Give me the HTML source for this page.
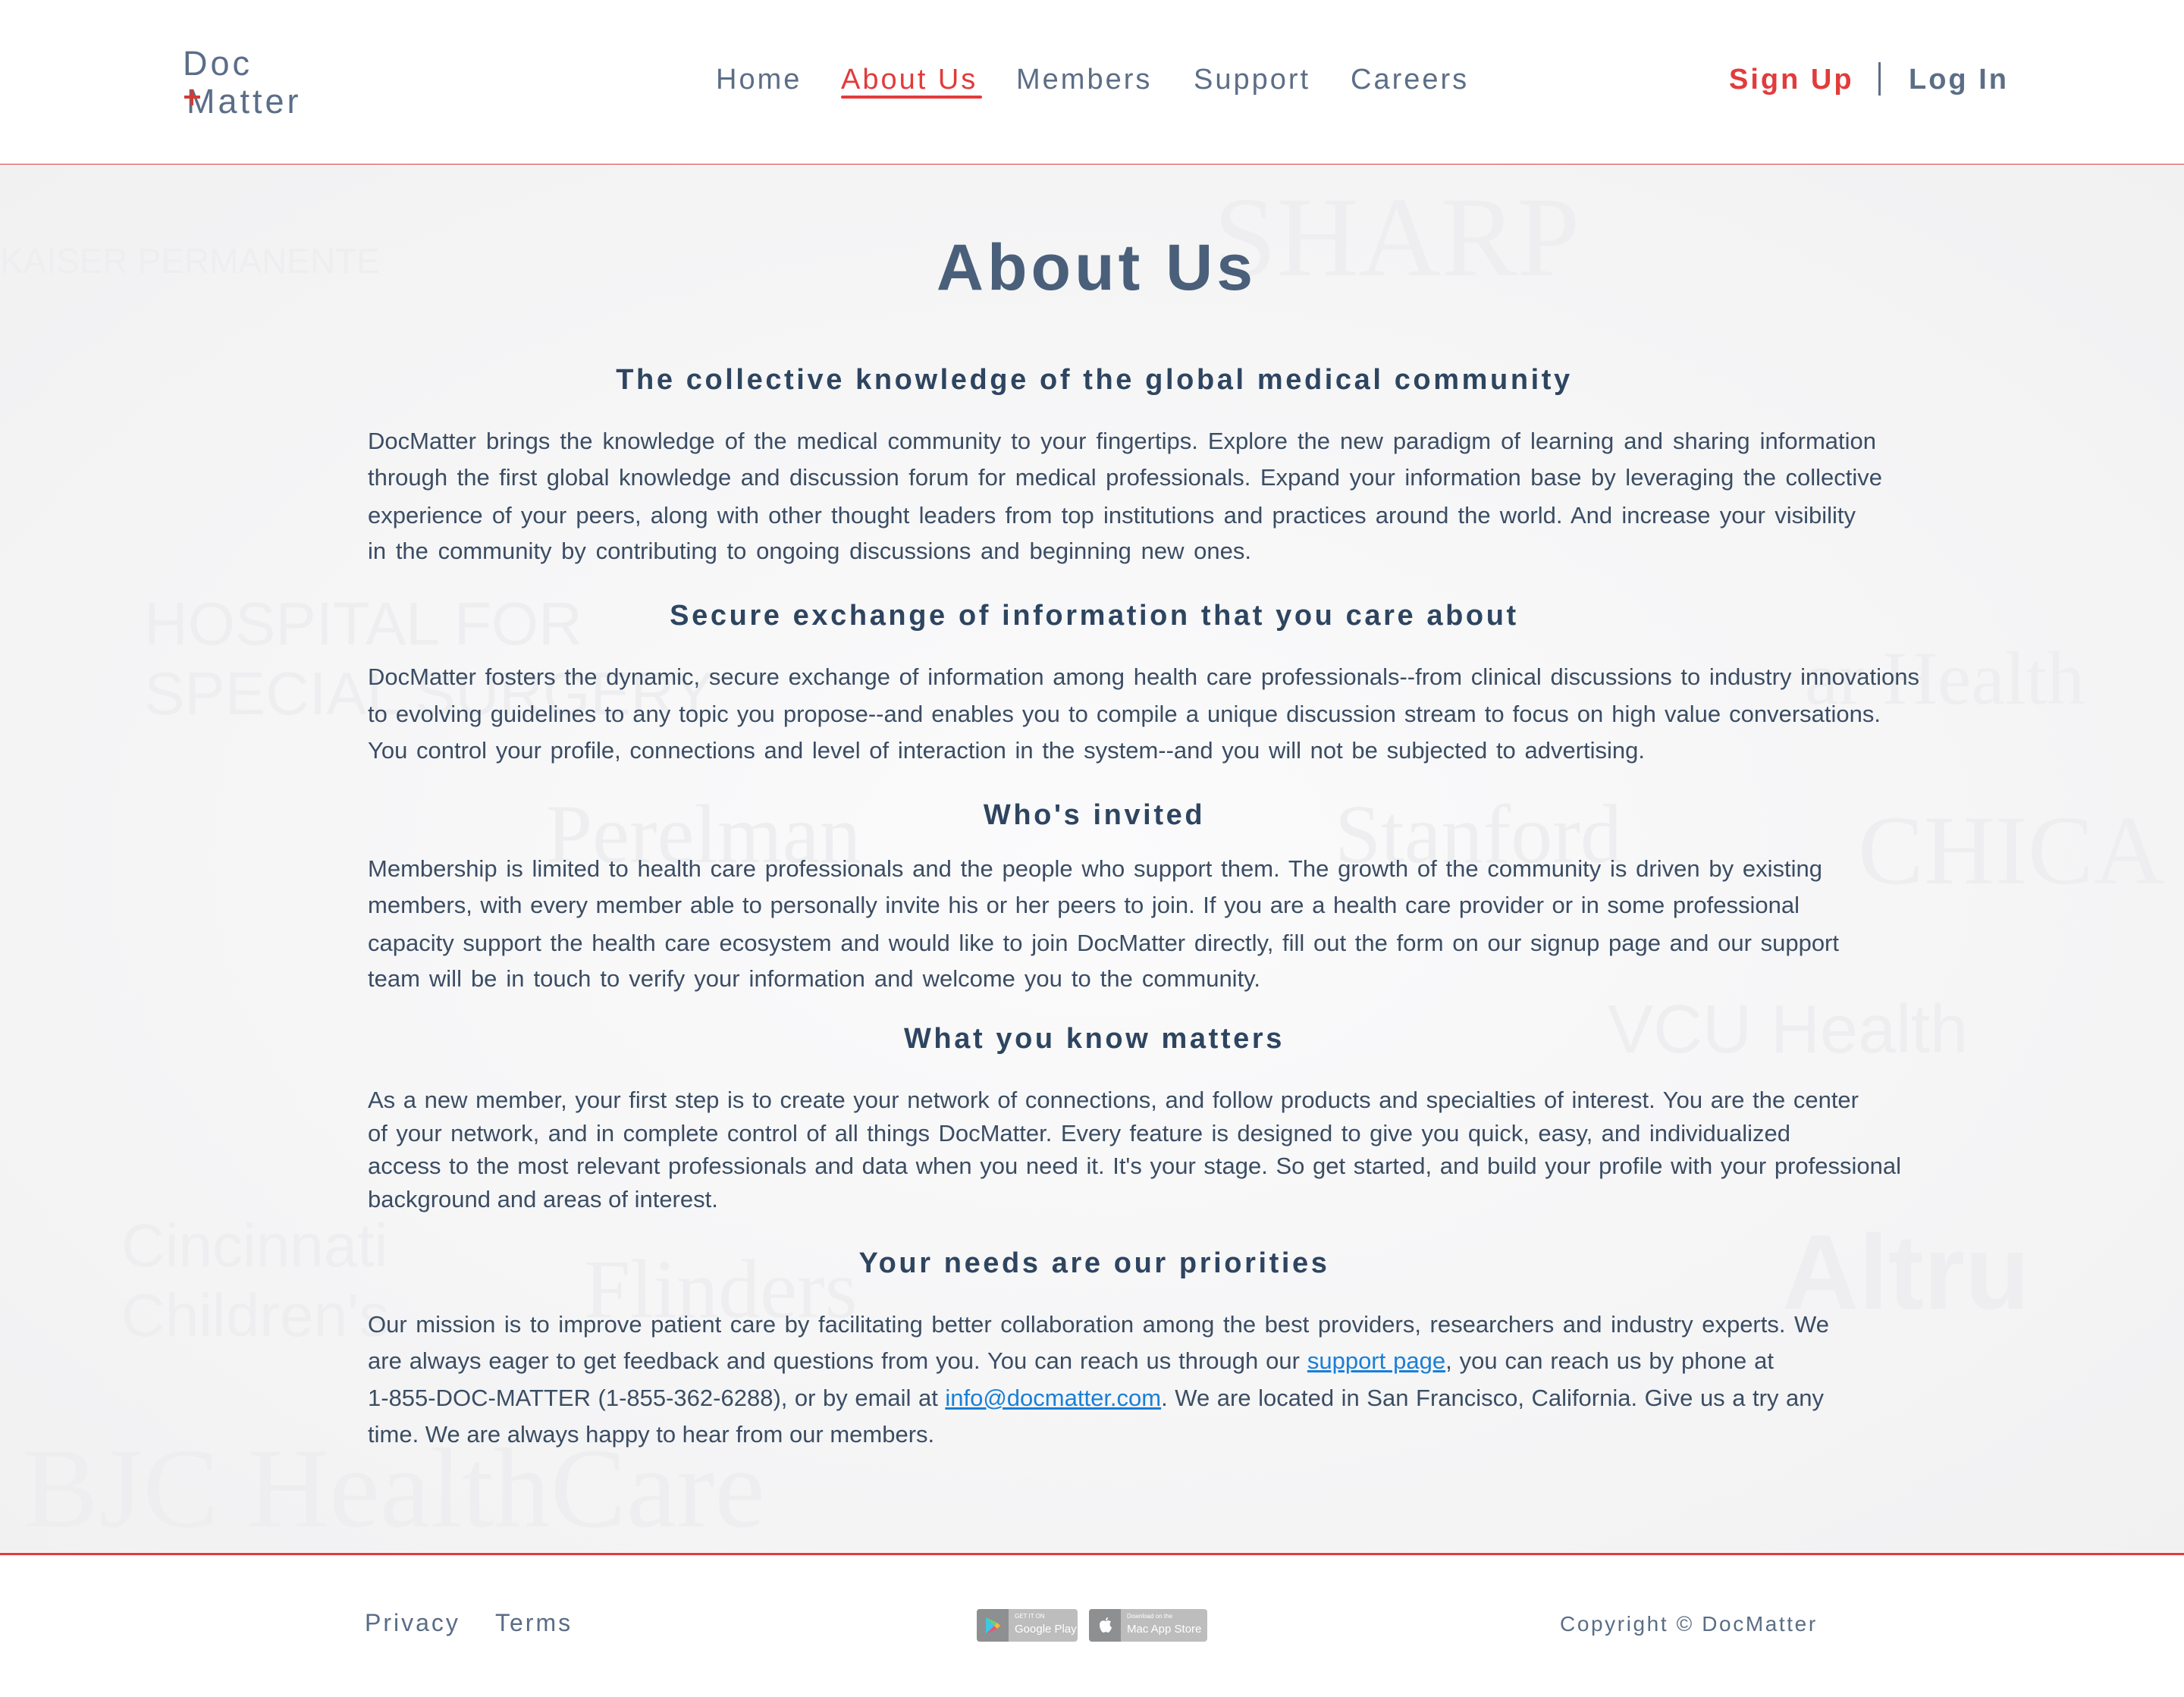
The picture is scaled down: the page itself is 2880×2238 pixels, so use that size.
<!DOCTYPE html>
<html><head><meta charset="utf-8"><style>
*{margin:0;padding:0;box-sizing:border-box}
html,body{width:2880px;height:2238px;overflow:hidden;background:#fff;font-family:"Liberation Sans",sans-serif}
.abs{position:absolute;white-space:nowrap}
#bg{position:absolute;left:0;top:217px;width:2880px;height:1833px;background:radial-gradient(ellipse at 50% 50%,#fbfbfc 0%,#f5f5f6 60%,#f1f1f2 100%);overflow:hidden}
.wm{position:absolute;white-space:nowrap;color:#eeeef0;font-family:"Liberation Serif",serif}
.nav{position:absolute;top:82px;font-size:38px;letter-spacing:3px;color:#5c6e86;line-height:46px}
.h2{position:absolute;left:0;width:2886px;text-align:center;font-size:38px;font-weight:bold;letter-spacing:3.6px;color:#2e4560;line-height:46px}
.ln{position:absolute;left:485px;height:40px;line-height:40px;font-size:31px;letter-spacing:0;color:#3b4d63;text-align:justify;text-align-last:justify;white-space:nowrap;overflow:visible}
.ln.last{text-align:left;text-align-last:left}
a{color:#1a7fd6;text-decoration:underline}
</style></head><body>
<div class="abs" style="left:241px;top:56px;font-size:45px;letter-spacing:4px;color:#5a6e88;line-height:56px">Doc</div>
<div class="abs" style="left:246px;top:106px;font-size:45px;letter-spacing:4px;color:#5a6e88;line-height:56px">Matter</div>
<div class="abs" style="left:243px;top:126px;width:21px;height:4px;background:#d33a34"></div>
<div class="abs" style="left:251px;top:118px;width:4px;height:21px;background:#d33a34"></div>

<div class="nav" style="left:944px">Home</div>
<div class="nav" style="left:1109px;color:#e23b3b">About Us</div>
<div class="abs" style="left:1109px;top:126px;width:186px;height:4px;background:#e23b3b;border-radius:2px"></div>
<div class="nav" style="left:1340px">Members</div>
<div class="nav" style="left:1574px">Support</div>
<div class="nav" style="left:1781px">Careers</div>
<div class="nav" style="left:2280px;color:#e23b3b;font-weight:bold;letter-spacing:3px">Sign Up</div>
<div class="abs" style="left:2477px;top:82px;width:3px;height:44px;background:#5c6e86"></div>
<div class="nav" style="left:2517px;font-weight:bold;letter-spacing:3px">Log In</div>

<div class="abs" style="left:0;top:216px;width:2880px;height:3px;background:#e5393d"></div>

<div id="bg">
<div class="wm" style="left:0;top:100px;font-size:46px;font-family:'Liberation Sans'">KAISER PERMANENTE</div>
<div class="wm" style="left:1600px;top:10px;font-size:150px">SHARP</div>
<div class="wm" style="left:190px;top:560px;font-size:80px;font-family:'Liberation Sans'">HOSPITAL FOR<br>SPECIAL SURGERY</div>
<div class="wm" style="left:720px;top:820px;font-size:110px">Perelman</div>
<div class="wm" style="left:1760px;top:820px;font-size:110px">Stanford</div>
<div class="wm" style="left:2450px;top:830px;font-size:130px">CHICA</div>
<div class="wm" style="left:2120px;top:1090px;font-size:90px;font-family:'Liberation Sans'">VCU Health</div>
<div class="wm" style="left:160px;top:1380px;font-size:80px;font-family:'Liberation Sans'">Cincinnati<br>Children's</div>
<div class="wm" style="left:770px;top:1420px;font-size:110px">Flinders</div>
<div class="wm" style="left:2350px;top:1380px;font-size:140px;font-family:'Liberation Sans';font-weight:bold">Altru</div>
<div class="wm" style="left:30px;top:1660px;font-size:150px">BJC HealthCare</div>
<div class="wm" style="left:2380px;top:620px;font-size:100px">ar Health</div>
</div>

<div class="abs" style="left:0;width:2892px;text-align:center;top:300px;font-size:86px;letter-spacing:5px;color:#4a5f7a;line-height:106px;font-weight:bold">About Us</div>

<div class="h2" style="top:478px">The collective knowledge of the global medical community</div>
<div class="ln" style="top:562px;width:1989px">DocMatter brings the knowledge of the medical community to your fingertips. Explore the new paradigm of learning and sharing information</div>
<div class="ln" style="top:610px;width:1997px">through the first global knowledge and discussion forum for medical professionals. Expand your information base by leveraging the collective</div>
<div class="ln" style="top:660px;width:1962px">experience of your peers, along with other thought leaders from top institutions and practices around the world. And increase your visibility</div>
<div class="ln" style="top:707px;width:1165px">in the community by contributing to ongoing discussions and beginning new ones.</div>

<div class="h2" style="top:789px">Secure exchange of information that you care about</div>
<div class="ln" style="top:873px;width:2046px">DocMatter fosters the dynamic, secure exchange of information among health care professionals--from clinical discussions to industry innovations</div>
<div class="ln" style="top:922px;width:1995px">to evolving guidelines to any topic you propose--and enables you to compile a unique discussion stream to focus on high value conversations.</div>
<div class="ln" style="top:970px;width:1684px">You control your profile, connections and level of interaction in the system--and you will not be subjected to advertising.</div>

<div class="h2" style="top:1052px">Who's invited</div>
<div class="ln" style="top:1126px;width:1918px">Membership is limited to health care professionals and the people who support them. The growth of the community is driven by existing</div>
<div class="ln" style="top:1174px;width:1888px">members, with every member able to personally invite his or her peers to join. If you are a health care provider or in some professional</div>
<div class="ln" style="top:1224px;width:1940px">capacity support the health care ecosystem and would like to join DocMatter directly, fill out the form on our signup page and our support</div>
<div class="ln" style="top:1271px;width:1177px">team will be in touch to verify your information and welcome you to the community.</div>

<div class="h2" style="top:1347px">What you know matters</div>
<div class="ln" style="top:1431px;width:1966px">As a new member, your first step is to create your network of connections, and follow products and specialties of interest. You are the center</div>
<div class="ln" style="top:1475px;width:1876px">of your network, and in complete control of all things DocMatter. Every feature is designed to give you quick, easy, and individualized</div>
<div class="ln" style="top:1518px;width:2022px">access to the most relevant professionals and data when you need it. It's your stage. So get started, and build your profile with your professional</div>
<div class="ln last" style="top:1562px">background and areas of interest.</div>

<div class="h2" style="top:1643px">Your needs are our priorities</div>
<div class="ln" style="top:1727px;width:1927px">Our mission is to improve patient care by facilitating better collaboration among the best providers, researchers and industry experts. We</div>
<div class="ln" style="top:1775px;width:1854px">are always eager to get feedback and questions from you. You can reach us through our <a>support page</a>, you can reach us by phone at</div>
<div class="ln" style="top:1824px;width:1920px">1-855-DOC-MATTER (1-855-362-6288), or by email at <a>info@docmatter.com</a>. We are located in San Francisco, California. Give us a try any</div>
<div class="ln last" style="top:1872px">time. We are always happy to hear from our members.</div>

<div class="abs" style="left:0;top:2048px;width:2880px;height:3px;background:#e5393d"></div>

<div class="abs" style="left:481px;top:2119px;font-size:32px;letter-spacing:3px;color:#5a6d85;line-height:42px">Privacy</div>
<div class="abs" style="left:653px;top:2119px;font-size:32px;letter-spacing:3px;color:#5a6d85;line-height:42px">Terms</div>

<div class="abs" style="left:1288px;top:2122px;width:133px;height:43px;background:#bdbdbd;border-radius:4px;overflow:hidden">
 <div style="position:absolute;left:0;top:0;width:42px;height:43px;background:#8e8f90"></div>
 <svg style="position:absolute;left:10px;top:10px" width="22" height="24" viewBox="0 0 22 24"><path d="M2 1 L2 23 L13 12 Z" fill="#3fc6e8"/><path d="M2 1 L13 12 L17 8 Z" fill="#6ccf7a"/><path d="M2 23 L13 12 L17 16 Z" fill="#e8567a"/><path d="M13 12 L17 8 L21 12 L17 16Z" fill="#f6b93c"/></svg>
 <div style="position:absolute;left:50px;top:5px;font-size:8px;color:#fff;line-height:10px">GET IT ON</div>
 <div style="position:absolute;left:50px;top:17px;font-size:15px;color:#fff;line-height:20px">Google Play</div>
</div>
<div class="abs" style="left:1436px;top:2122px;width:156px;height:43px;background:#bdbdbd;border-radius:4px;overflow:hidden">
 <div style="position:absolute;left:0;top:0;width:42px;height:43px;background:#8e8f90"></div>
 <svg style="position:absolute;left:13px;top:10px" width="18" height="22" viewBox="0 0 18 22"><path d="M9 6 C5 4 1 6 1 11 C1 16 4 21 6 21 C8 21 8 20 9 20 C10 20 11 21 12 21 C14 21 17 16 17 14 C14 13 14 8 16 7 C14 4 11 5 9 6Z" fill="#fff"/><path d="M9 5 C9 2 11 1 12 1 C12 3 11 5 9 5Z" fill="#fff"/></svg>
 <div style="position:absolute;left:50px;top:5px;font-size:8px;color:#fff;line-height:10px">Download on the</div>
 <div style="position:absolute;left:50px;top:17px;font-size:15px;color:#fff;line-height:20px">Mac App Store</div>
</div>

<div class="abs" style="left:2057px;top:2124px;font-size:28px;letter-spacing:2.6px;color:#5a6d85;line-height:36px">Copyright © DocMatter</div>
</body></html>
